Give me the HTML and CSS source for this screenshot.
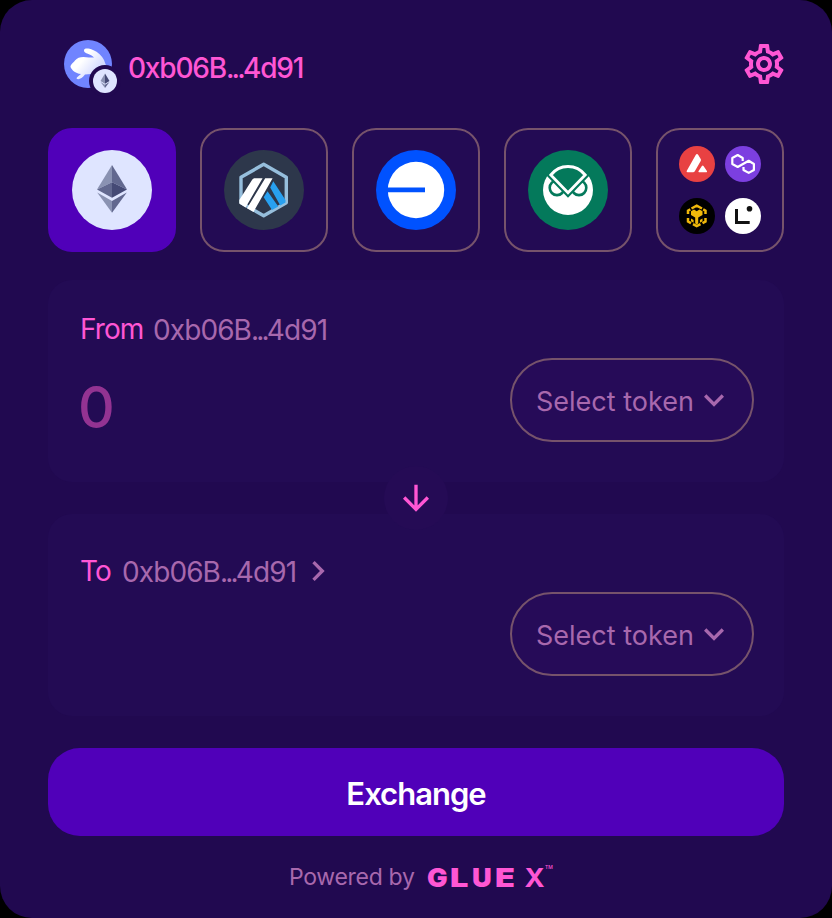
FILE: index.html
```html
<!DOCTYPE html>
<html lang="en">
<head>
<meta charset="utf-8">
<title>Exchange</title>
<link rel="stylesheet" href="styles.css">
</head>
<body>
<main class="widget">
  <header class="header">
    <div class="account">
      <div class="avatar">
        <svg width="48" height="48" viewBox="0 0 48 48">
          <defs><linearGradient id="fur" x1="0" x2="1" y1="0" y2=".7"><stop offset=".4" stop-color="#fff"/><stop offset="1" stop-color="#c3ccff"/></linearGradient></defs>
          <circle cx="24" cy="24" r="24" fill="#7084ff"/>
          <path d="M20 10.500C20 8 24 8 29 10C34 12 38 16 40 20L43 28L40 36L29 36L27 34L21 34.500C18 39 14 40 12.500 38.500C12.500 37 15 36 17 34C11 33.500 8 30 6.500 27C6.500 24 9 23.500 11 20.500C14 16.500 19 16.500 25 17.500L30 17.500C27 13.500 20 14 20 10.500Z" fill="url(#fur)"/>
        </svg>
        <svg class="badge" width="32" height="32" viewBox="0 0 32 32">
          <circle cx="16" cy="16" r="16" fill="#210950"/>
          <circle cx="16" cy="16" r="12" fill="#dfe5ff"/>
          <path d="M16 8.500L11.500 16L16 18.700Z" fill="#8a92b2"/><path d="M16 8.500L20.500 16L16 18.700Z" fill="#454a75"/>
          <path d="M11.500 17L16 19.700V23Z" fill="#8a92b2"/><path d="M20.500 17L16 19.700V23Z" fill="#62688f"/>
        </svg>
      </div>
      <span class="account-name">0xb06B<span class="dots">...</span>4d91</span>
    </div>
    <svg class="settings" width="48" height="48" viewBox="0 0 24 24"><path d="M19.43 12.980c.04-.32.07-.64.07-.98 0-.34-.03-.66-.07-.98l2.110-1.650c.19-.15.24-.42.12-.64l-2-3.460c-.09-.16-.26-.25-.44-.25-.06 0-.12.01-.17.03l-2.490 1c-.52-.4-1.080-.73-1.690-.98l-.38-2.650C14.460 2.180 14.250 2 14 2h-4c-.25 0-.46.18-.49.42l-.38 2.650c-.61.25-1.170.59-1.690.98l-2.490-1c-.06-.02-.12-.03-.18-.03-.17 0-.34.09-.43.25l-2 3.460c-.13.22-.07.49.12.64l2.110 1.650c-.04.32-.07.65-.07.98 0 .33.03.66.07.98l-2.110 1.650c-.19.15-.24.42-.12.64l2 3.460c.09.16.26.25.44.25.06 0 .12-.01.17-.03l2.490-1c.52.4 1.080.73 1.690.98l.38 2.650c.03.24.24.42.49.42h4c.25 0 .46-.18.49-.42l.38-2.650c.61-.25 1.170-.59 1.690-.98l2.490 1c.06.02.12.03.18.03.17 0 .34-.09.43-.25l2-3.460c.12-.22.07-.49-.12-.64l-2.110-1.650zm-1.980-1.710c.04.31.05.52.05.73 0 .21-.02.43-.05.73l-.14 1.130.89.7 1.080.84-.7 1.210-1.270-.51-1.040-.42-.9.68c-.43.32-.84.56-1.250.73l-1.060.43-.16 1.130-.2 1.350h-1.400l-.19-1.350-.16-1.130-1.060-.43c-.43-.18-.83-.41-1.230-.71l-.91-.7-1.060.43-1.270.51-.7-1.210 1.080-.84.89-.7-.14-1.130c-.03-.31-.05-.54-.05-.74s.02-.43.05-.73l.14-1.130-.89-.7-1.080-.84.7-1.210 1.270.51 1.040.42.9-.68c.43-.32.84-.56 1.250-.73l1.060-.43.16-1.130.2-1.350h1.390l.19 1.350.16 1.130 1.060.43c.43.18.83.41 1.230.71l.91.7 1.060-.43 1.270-.51.7 1.210-1.070.85-.89.7.14 1.130zM12 8c-2.210 0-4 1.790-4 4s1.790 4 4 4 4-1.790 4-4-1.790-4-4-4zm0 6c-1.100 0-2-.9-2-2s.9-2 2-2 2 .9 2 2-.9 2-2 2z"/></svg>
  </header>

  <nav class="chains">
    <button class="chain active" aria-label="Ethereum">
      <svg width="80" height="80" viewBox="0 0 80 80">
        <circle cx="40" cy="40" r="40" fill="#dfe5ff"/>
        <path d="M40 15L25 39.500L40 32.300Z" fill="#8a92b2"/><path d="M40 15L55 39.500L40 32.300Z" fill="#62688f"/>
        <path d="M25 39.500L40 32.300V47.800Z" fill="#62688f"/><path d="M55 39.500L40 32.300V47.800Z" fill="#454a75"/>
        <path d="M25.200 42.500L40 51V62.700Z" fill="#8a92b2"/><path d="M54.800 42.500L40 51V62.700Z" fill="#62688f"/>
      </svg>
    </button>
    <button class="chain" aria-label="Arbitrum">
      <svg width="80" height="80" viewBox="0 0 80 80">
        <circle cx="40" cy="40" r="40" fill="#2d374b"/>
        <path d="M39.700 14.300L62.300 27.200V52.800L39.700 65.800L17 52.800V27.200Z" fill="none" stroke="#96bedc" stroke-width="3.400" stroke-linejoin="round"/>
        <path d="M31 28.300H38.600L21.600 57.400L15.300 53.500V50L28 30C28.800 28.900 29.600 28.300 31 28.300ZM41.200 28.300H48.600L29.500 62L23 58.300Z" fill="#fff"/>
        <path d="M49.300 31.300L61.500 50V52.500L56.300 55.400L46.200 37.500ZM43.500 41.300L54.300 56.500L48 60L39.700 47.300Z" fill="#28a0f0"/>
      </svg>
    </button>
    <button class="chain" aria-label="Base">
      <svg width="80" height="80" viewBox="0 0 80 80">
        <circle cx="40" cy="40" r="40" fill="#0052ff"/><circle cx="40" cy="40" r="28.200" fill="#fff"/><path d="M10 37.600H49V42.200H10Z" fill="#0052ff"/>
      </svg>
    </button>
    <button class="chain" aria-label="Gnosis">
      <svg width="80" height="80" viewBox="0 0 80 80">
        <circle cx="40" cy="40" r="40" fill="#04795b"/><circle cx="40" cy="40" r="25" fill="#fff"/>
        <g fill="none" stroke="#04795b" stroke-width="2.600"><circle cx="29" cy="37.800" r="7.300"/><circle cx="51" cy="37.800" r="7.300"/></g>
        <path d="M22.800 25C31.500 13.600 48.500 13.600 57.200 25L40 42.700Z" fill="#04795b" stroke="#04795b" stroke-width="7"/>
        <path d="M22.800 25C31.500 13.600 48.500 13.600 57.200 25L40 42.700Z" fill="#04795b" stroke="#fff" stroke-width="2.900"/>
      </svg>
    </button>
    <button class="chain more" aria-label="More chains">
      <svg width="36" height="36" viewBox="0 0 36 36"><circle cx="18" cy="18" r="18" fill="#e84142"/><path d="M16.700 9Q18 7.200 19.300 9L21.700 13Q22.300 14 21.700 15L15.800 25.200Q15.200 26.300 14 26.300H8.700Q7 26.300 7.800 24.800ZM22.900 20Q23.700 18.800 24.500 20L27.900 25Q28.500 26.300 27.300 26.300H20.200Q18.900 26.300 19.600 25Z" fill="#fff"/></svg>
      <svg width="36" height="36" viewBox="0 0 36 36"><circle cx="18" cy="18" r="18" fill="#7c3fe0"/><path d="M17.700 15V12L12.700 9L7.300 12V18L12.700 21L23.700 14.800L28.900 18V24L23.700 26.900L18.500 24V21" fill="none" stroke="#fff" stroke-width="2.200" stroke-linejoin="round"/></svg>
      <svg width="36" height="36" viewBox="0 0 36 36"><circle cx="18" cy="18" r="18"/><g fill="none" stroke="#f0b90b" stroke-width="2.500"><path d="M12.500 10.500L17.700 7.700L23 10.500M9 16V12.700L11.300 11.400M24.200 11.400L26.500 12.700V16M9 20V23.500L12 25.200M26.500 20V23.500L23.500 25.200M14 26.200L17.700 28.200L21.500 26.200"/></g><path d="M12 13.200L15 11.600L17.700 13.200L20.500 11.600L23.500 13.200V17L19.200 19.500V25.500L17.700 26.300L16.200 25.500V19.500L12 17Z" fill="#f0b90b"/><path d="M12 20.500L14.600 22V24.800L12 23.300ZM23.500 20.500L20.900 22V24.800L23.500 23.300Z" fill="#f0b90b"/></svg>
      <svg width="36" height="36" viewBox="0 0 36 36"><circle cx="18" cy="18" r="18" fill="#fff"/><path d="M10 11H13V23H24.700V25.900H10Z" fill="#121212"/><circle cx="24.500" cy="10.700" r="2.800" fill="#121212"/></svg>
    </button>
  </nav>

  <section class="swap">
    <div class="panel">
      <div class="panel-label"><span class="side side-from">From</span><span class="address">0xb06B<span class="dots">...</span>4d91</span></div>
      <div class="panel-row">
        <span class="amount">0</span>
        <button class="select"><span>Select token</span><svg width="40" height="40" viewBox="0 0 24 24"><path d="M7.410 8.590L12 13.170l4.590-4.580L18 10l-6 6-6-6z"/></svg></button>
      </div>
    </div>
    <div class="panel panel-to">
      <div class="panel-label"><span class="side side-to">To</span><span class="address">0xb06B<span class="dots">...</span>4d91</span><svg class="go" width="40" height="40" viewBox="0 0 24 24"><path d="M10 6L8.590 7.410L13.170 12l-4.580 4.590L10 18l6-6z"/></svg></div>
      <div class="panel-row">
        <button class="select"><span>Select token</span><svg width="40" height="40" viewBox="0 0 24 24"><path d="M7.410 8.590L12 13.170l4.590-4.580L18 10l-6 6-6-6z"/></svg></button>
      </div>
    </div>
    <div class="direction"><svg width="40" height="40" viewBox="0 0 24 24"><path d="M12 4V18.600M4.900 11.700L12 18.800L19.100 11.700" fill="none" stroke="#ff56d4" stroke-width="2"/></svg></div>
  </section>

  <button class="exchange"><span>Exchange</span></button>

  <footer class="footer">
    <span class="powered">Powered by</span>
    <span class="brand"><span class="brand-word"><b>G</b><b class="wide">L</b><b>U</b><b class="wide">E</b></span><span class="brand-x">X</span><span class="brand-tm">TM</span></span>
  </footer>
</main>
</body>
</html>
```
FILE: styles.css
```css
* { box-sizing: border-box; }
body { margin: 0; background: #000; font-family: Inter, "Liberation Sans", sans-serif; }
svg { display: block; flex: none; }
button { font: inherit; color: inherit; margin: 0; padding: 0; border: 0; background: none; }

.widget {
  width: 832px;
  height: 918px;
  padding: 40px 48px 0;
  border-radius: 32px;
  background: #210950;
  overflow: hidden;
}

.header { display: flex; justify-content: space-between; height: 88px; padding-left: 16px; }
.settings { fill: #ff56d4; margin-right: -4px; }
.account { display: flex; height: 54px; gap: 16px; align-items: center; }
.avatar { position: relative; width: 48px; height: 54px; }
.badge { position: absolute; left: 25px; top: 25px; }
.account-name { padding-top: 2px; color: #ff56d4; font-size: 28px; font-weight: 500; line-height: 54px; letter-spacing: -1.200px; white-space: nowrap; }
.dots { letter-spacing: -2.800px; }

.chains { display: grid; grid-template-columns: repeat(5, 128px); gap: 24px; height: 124px; }
.chain { display: flex; align-items: center; justify-content: center; border: 2px solid #76536b; border-radius: 24px; background: #230b54; }
.chain.active { border-color: #5000b9; background: #5000b9; }
.chain.more { display: grid; grid-template-columns: 36px 36px; gap: 16px 10px; align-content: center; }

.swap { position: relative; display: flex; flex-direction: column; gap: 32px; margin-top: 28px; }
.panel { height: 202px; padding: 32px 30px 0 32px; border-radius: 24px; background: #230b54; }
.panel-label { display: flex; align-items: center; height: 34px; font-size: 28px; line-height: 34px; white-space: nowrap; }
.side { color: #ff56d4; letter-spacing: -.900px; }
.side-from { width: 73px; }
.side-to { width: 42px; }
.address { width: 176px; padding-top: 1px; color: #a868ad; letter-spacing: -.900px; }
.go { fill: #a868ad; }
.panel-row { display: flex; justify-content: flex-end; margin-top: 12px; height: 84px; }
.panel-to { padding-top: 40px; }
.panel-to .panel-row { margin-top: 4px; }
.amount { margin-right: auto; margin-left: -2px; color: #933392; font-size: 57px; font-weight: 500; line-height: 100px; }
.select { display: flex; align-items: center; width: 244px; height: 84px; padding: 0 0 0 24px; border: 2px solid #76536b; border-radius: 42px; background: #260b58; color: #a868ad; font-size: 27px; white-space: nowrap; }
.select span { width: 158px; padding-top: 2px; text-align: left; }
.select svg { fill: #a868ad; }
.direction { position: absolute; left: 336px; top: 186px; width: 64px; height: 64px; border-radius: 50%; background: #250b55; display: flex; align-items: center; justify-content: center; }

.exchange { display: block; width: 736px; height: 88px; margin-top: 32px; padding-top: 4px; border-radius: 32px; background: #5000b9; color: #fff; font-size: 31px; font-weight: 600; letter-spacing: -1px; line-height: 84px; }

.footer { display: flex; align-items: center; height: 82px; padding-left: 241px; white-space: nowrap; }
.powered { width: 138px; color: #a868ad; font-size: 23px; letter-spacing: -.300px; }
.brand { display: flex; padding-top: 1px; color: #ff56d4; font-weight: 700; font-size: 26px; line-height: 30px; }
.brand-word { display: grid; grid-template-columns: repeat(4, 22.700px); width: 98px; }
.brand-word b { transform: scaleX(1.050); transform-origin: 0 50%; }
.brand-word .wide { transform: scaleX(1.250); }
.brand-x { width: 20px; transform: scaleX(1.050); }
.brand-tm { font-size: 5px; font-weight: 500; line-height: 9px; }
```
